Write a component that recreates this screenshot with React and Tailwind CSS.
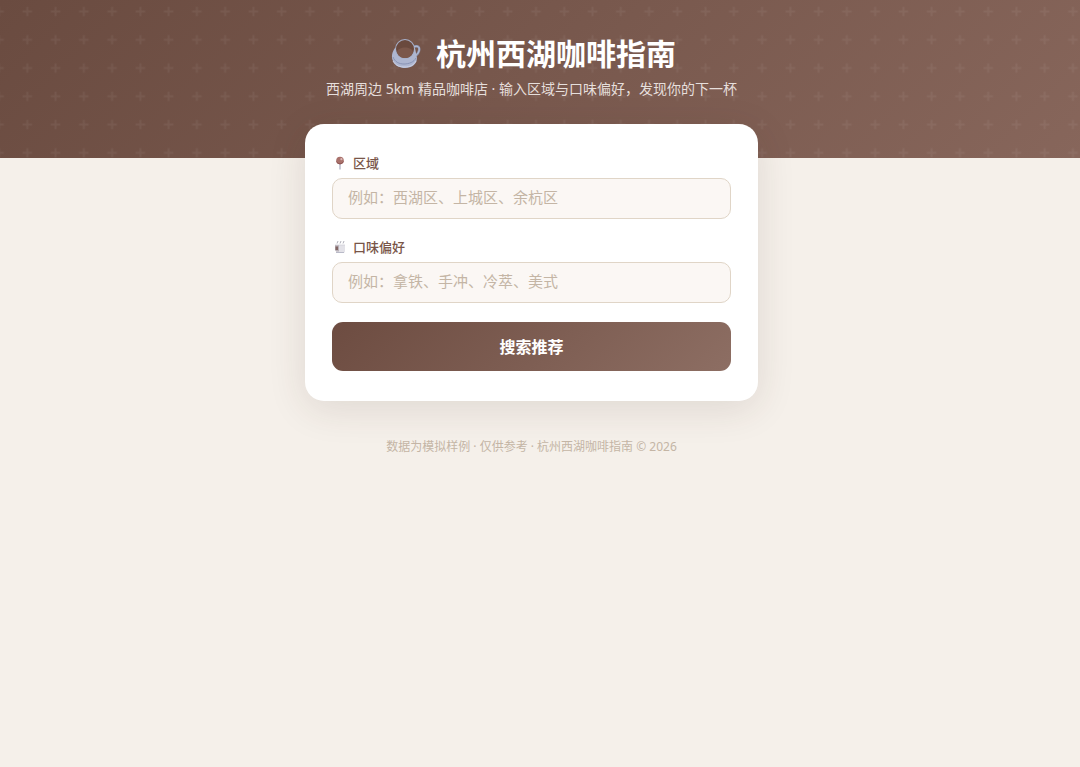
import React from 'react';

const fields = [
    { id: 'area', label: '区域', placeholder: '例如：西湖区、上城区、余杭区', icon: PinIcon },
    { id: 'taste', label: '口味偏好', placeholder: '例如：拿铁、手冲、冷萃、美式', icon: MugIcon },
];

function PlusPattern() {
    return (
        <svg className="absolute inset-0 w-full h-full" aria-hidden="true">
            <defs>
                <pattern id="plus" width="30" height="30" patternUnits="userSpaceOnUse" patternTransform="translate(13.2 -2.6) scale(0.942)">
                    <path d="M14 10h2v4h4v2h-4v4h-2v-4h-4v-2h4z" fill="#fff" fillOpacity="0.055" />
                </pattern>
            </defs>
            <rect width="100%" height="100%" fill="url(#plus)" />
        </svg>
    );
}

function CupIcon() {
    return (
        <svg className="w-[30px] h-[30px]" viewBox="0 0 30 30" fill="none" aria-hidden="true">
            <path d="M22 8c5-2 7 0 6 4-1 3-3 5-6 5" stroke="#8e99b8" strokeWidth="2.4" />
            <path d="M22 8c5-2 7 0 6 4-1 3-3 5-6 5" stroke="#c4cade" strokeWidth="0.8" />
            <path d="M4 9C1 13 0 18 2 22c2 5 7 7 12 7 7 0 12-4 12-10l-2-10z" fill="#aeb6d0" />
            <path d="M2 18c2 5 6 7 11 7s10-2 12-6" stroke="#8590b2" strokeWidth="0.9" />
            <path d="M2 22c3 5 7 6 12 6 5 0 9-2 11-6" stroke="#cfd4e5" strokeWidth="0.9" />
            <circle cx="14" cy="10" r="10" fill="#a7b0ca" />
            <circle cx="14" cy="10" r="9" fill="#6a493e" />
            <path d="M6 13c1-6 15-6 16 0-1 4-4 6-8 6s-7-2-8-6z" fill="#7b574b" />
        </svg>
    );
}

function PinIcon() {
    return (
        <svg className="w-4 h-4" viewBox="0 0 16 16" fill="none" aria-hidden="true">
            <path d="M8 8v6.5" stroke="#b4b5c6" strokeWidth="1.4" />
            <circle cx="8" cy="5.5" r="3.8" fill="#a9716b" />
            <path d="M4.5 6.5c1 2.5 5 3.5 7 0" stroke="#874f4e" strokeWidth="1" />
            <circle cx="9.4" cy="4.2" r="1.1" fill="#dcbab8" />
        </svg>
    );
}

function MugIcon() {
    return (
        <svg className="w-4 h-4" viewBox="0 0 16 16" fill="none" aria-hidden="true">
            <path d="M5 4.5l1-2.5M8 4.5l1-2.5M11 4.5l1-2.5" stroke="#a9a9b3" strokeWidth="0.9" />
            <path d="M4 6h9v6c0 1.5-1 2-2 2H6c-1 0-2-.5-2-2z" fill="#e3e2e8" />
            <path d="M3 6h4v6.5H4.5C3 12 3 11 3 10z" fill="#b9b1b8" />
            <path d="M3.5 7.5H6V11H3.5z" fill="#826664" />
            <path d="M4 13.5h8" stroke="#b9bac8" strokeWidth="1" />
            <path d="M3 6h10" stroke="#d0d0d8" strokeWidth="0.8" />
        </svg>
    );
}

export default function App() {
    return (
        <div className="min-h-screen bg-[#f5f0ea] font-['Noto_Sans','Noto_Sans_CJK_SC',sans-serif]">
            <header className="relative bg-linear-135 from-[#6a4b40] to-[#87665b] pt-9 pb-14 pr-[17px] text-center">
                <PlusPattern />
                <div className="relative">
                    <h1 className="flex items-center justify-center gap-[15px] pl-1 text-[30px] leading-9 font-bold text-white">
                        <CupIcon />
                        杭州西湖咖啡指南
                    </h1>
                    <p className="mt-[5px] mb-px text-sm leading-6 text-[#e6dfdc]">
                        西湖周边 5km 精品咖啡店 · 输入区域与口味偏好，发现你的下一杯
                    </p>
                </div>
            </header>

            <main className="relative -mt-[34px] pr-[17px]">
                <form
                    className="mx-auto w-full max-w-[453px] rounded-[19px] bg-white px-[27px] pt-[30px] pb-[30px] shadow-[0_8px_38px_rgba(62,39,35,0.12)]"
                    onSubmit={(e) => e.preventDefault()}
                >
                    {fields.map((field) => (
                        <div key={field.id} className="mb-[19px]">
                            <label htmlFor={field.id} className="mb-[6px] flex items-center gap-[5px] text-[13px] leading-[18px] font-medium text-[#795548]">
                                <field.icon />
                                {field.label}
                            </label>
                            <input
                                id={field.id}
                                type="text"
                                placeholder={field.placeholder}
                                className="block h-[41px] w-full rounded-[10px] border border-[#e0d5c7] bg-[#fbf7f4] px-[15px] pb-[3px] text-[15px] text-[#4e342e] outline-none placeholder:text-[#c4b5a5] focus:border-[#8d6e63]"
                            />
                        </div>
                    ))}
                    <button type="submit" className="h-[49px] w-full rounded-[11px] bg-linear-135 from-[#6d4c41] to-[#8d6e63] text-base font-bold text-white">
                        搜索推荐
                    </button>
                </form>

                <footer className="mt-9 text-center text-xs leading-5 text-[#c4b5a5]">
                    数据为模拟样例 · 仅供参考 · 杭州西湖咖啡指南 © 2026
                </footer>
            </main>
        </div>
    );
}
